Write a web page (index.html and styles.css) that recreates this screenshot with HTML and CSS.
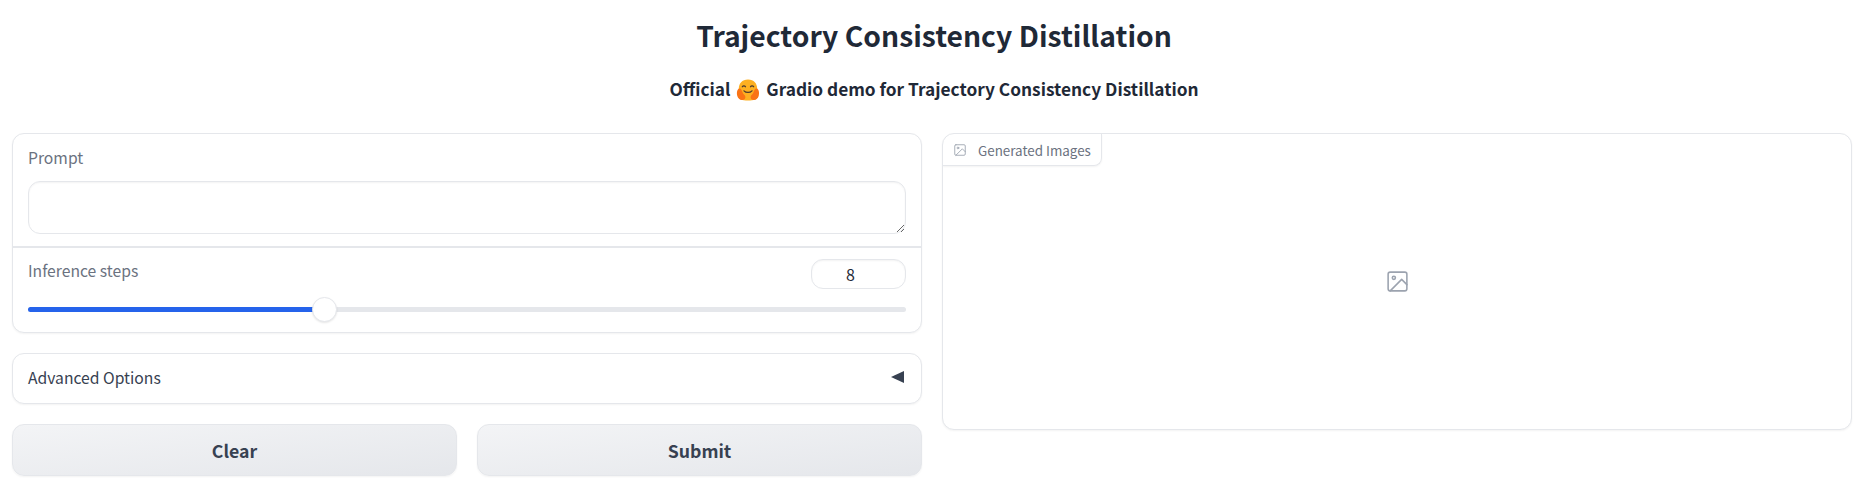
FILE: index.html
```html
<!DOCTYPE html>
<html lang="en">
<head>
<meta charset="utf-8">
<title>Trajectory Consistency Distillation</title>
<link rel="stylesheet" href="styles.css">
</head>
<body>
<header class="intro">
  <h1 class="title">Trajectory Consistency Distillation</h1>
  <p class="subtitle">Official
    <svg class="hug" viewBox="0 0 24 24" aria-hidden="true">
      <path d="M12 1.500C6 1.500 2.800 5.500 2.800 11c0 2.800-.6 5-.6 7.200C2.200 21 6 22.500 12 22.500s9.800-1.500 9.800-4.300c0-2.200-.6-4.400-.6-7.200C21.200 5.500 18 1.500 12 1.500z" fill="#fdb022"/>
      <path d="M3 10.500C1 11.500 .5 15 1.300 18c.6 2.300 2.400 4 4.700 4 2.600 0 3.800-1.700 3.300-3.500-.5-1.700-2.200-2.300-2.800-4.200C5.800 12.300 4.800 9.800 3 10.500zM21 10.500c2 1 2.500 4.500 1.700 7.500-.6 2.300-2.400 4-4.700 4-2.600 0-3.800-1.700-3.300-3.500.5-1.700 2.200-2.300 2.800-4.200.7-2 1.700-4.500 3.500-3.800z" fill="#f97316"/>
      <path d="M6.300 8.800c.7-1.300 2.500-1.300 3.200 0M14.500 8.800c.7-1.300 2.500-1.300 3.200 0" fill="none" stroke="#4b3a2f" stroke-width="1.200" stroke-linecap="round"/>
      <path d="M8 12.800c2 2.200 6 2.200 8 0" fill="none" stroke="#4b3a2f" stroke-width="1.200" stroke-linecap="round"/>
    </svg>
    Gradio demo for Trajectory Consistency Distillation</p>
</header>
<main class="columns">
  <section class="col-left">
    <div class="panel form">
      <div class="field field-prompt">
        <label class="label" for="prompt">Prompt</label>
        <textarea class="textbox" id="prompt"></textarea>
      </div>
      <div class="field field-slider">
        <div class="slider-head">
          <label class="label" for="steps">Inference steps</label>
          <input class="number" id="steps" type="text" value="8">
        </div>
        <div class="track">
          <div class="track-fill"></div>
          <div class="thumb"></div>
        </div>
      </div>
    </div>
    <div class="panel accordion">
      <span>Advanced Options</span>
      <span class="caret"></span>
    </div>
    <div class="actions">
      <button class="btn" type="button">Clear</button>
      <button class="btn" type="button">Submit</button>
    </div>
  </section>
  <section class="col-right">
    <div class="panel gallery">
      <div class="tab">
        <svg class="tab-icon" viewBox="0 0 24 24" aria-hidden="true">
          <rect x="3" y="3" width="18" height="18" rx="2"/>
          <circle cx="8.500" cy="8.500" r="1.500"/>
          <path d="M21 15l-5-5L5 21"/>
        </svg>
        <span>Generated Images</span>
      </div>
      <div class="empty">
        <svg class="empty-icon" viewBox="0 0 24 24" aria-hidden="true">
          <rect x="3" y="3" width="18" height="18" rx="2"/>
          <circle cx="8.500" cy="8.500" r="1.500"/>
          <path d="M21 15l-5-5L5 21"/>
        </svg>
      </div>
    </div>
  </section>
</main>
</body>
</html>
```
FILE: styles.css
```css
* { box-sizing: border-box; }
html, body { margin: 0; background: #fff; }
body {
  font-family: "Noto Sans CJK SC", "Noto Sans", sans-serif;
  color: #1f2937;
  padding: 0 16px 0 12px;
  height: 493px;
  overflow: hidden;
}
.intro { text-align: center; padding-left: 4px; }
.title {
  margin: 0;
  padding-top: 15px;
  font-size: 28.300px;
  line-height: 40px;
  font-weight: 600;
}
.subtitle {
  margin: 0;
  padding-top: 19px;
  font-size: 17.300px;
  line-height: 30px;
  font-weight: 600;
  height: 78px;
}
.hug { width: 24px; height: 24px; vertical-align: -6px; margin: 0 2px; }
.columns {
  display: grid;
  grid-template-columns: 1fr 1fr;
  gap: 20px;
  align-items: start;
}
.col-left { display: flex; flex-direction: column; gap: 20px; }
.panel {
  background: #fff;
  border: 1px solid #e5e7eb;
  border-radius: 12px;
  box-shadow: 0 1px 2px rgba(0, 0, 0, 0.05);
}
.form { overflow: hidden; height: 200px; }
.field { padding: 0 15px; }
.field-prompt {
  height: 114px;
  padding-top: 12px;
  border-bottom: 2px solid #e5e7eb;
}
.field-slider { padding-top: 11px; }
.label {
  display: block;
  font-size: 15.700px;
  line-height: 24px;
  color: #6b7280;
}
.textbox {
  display: block;
  width: 100%;
  height: 53px;
  margin-top: 11px;
  padding: 8px 12px;
  border: 1px solid #e5e7eb;
  border-radius: 12px;
  background: #fff;
  box-shadow: inset 0 1px 2px rgba(0, 0, 0, 0.05);
  font: inherit;
  outline: none;
}
.slider-head { display: flex; justify-content: space-between; align-items: flex-start; }
.number {
  width: 95px;
  height: 30px;
  border: 1px solid #e5e7eb;
  border-radius: 12px;
  box-shadow: inset 0 1px 2px rgba(0, 0, 0, 0.05);
  text-align: center;
  font: inherit;
  font-size: 16px;
  color: #1f2937;
  outline: none;
  padding: 0 16px 0 0;
}
.track {
  position: relative;
  height: 5px;
  margin-top: 18px;
  border-radius: 3px;
  background: #e5e7eb;
}
.track-fill {
  height: 100%;
  width: 33%;
  border-radius: 3px 0 0 3px;
  background: #2563eb;
}
.thumb {
  position: absolute;
  left: 32.400%;
  top: -10px;
  width: 25px;
  height: 25px;
  border: 1px solid #e5e7eb;
  border-radius: 50%;
  background: #fff;
  box-shadow: 0 1px 2px rgba(0, 0, 0, 0.1);
}
.accordion {
  display: flex;
  justify-content: space-between;
  align-items: center;
  height: 51px;
  padding: 0 17px 3px 15px;
  font-size: 15.700px;
  color: #374151;
}
.caret {
  width: 0;
  height: 0;
  border-style: solid;
  border-width: 6.500px 13px 6.500px 0;
  border-color: transparent #374151 transparent transparent;
}
.actions { display: grid; grid-template-columns: 1fr 1fr; gap: 20px; }
.btn {
  height: 52px;
  border: 1px solid #e5e7eb;
  border-radius: 12px;
  background: linear-gradient(to bottom right, #f3f4f6, #e5e7eb);
  box-shadow: 0 1px 2px rgba(0, 0, 0, 0.05);
  font: inherit;
  font-size: 17.700px;
  font-weight: 600;
  color: #374151;
}
.gallery {
  position: relative;
  height: 297px;
  display: flex;
  overflow: hidden;
}
.tab {
  position: absolute;
  top: 0;
  left: 0;
  display: flex;
  align-items: center;
  gap: 11px;
  height: 32px;
  padding: 0 10px;
  border-right: 1px solid #e5e7eb;
  border-bottom: 1px solid #e5e7eb;
  border-bottom-right-radius: 8px;
  box-shadow: 0 1px 2px rgba(0, 0, 0, 0.05);
  font-size: 13.400px;
  color: #6b7280;
}
.tab-icon, .empty-icon {
  fill: none;
  stroke: #9ca3af;
  stroke-width: 1.500;
  stroke-linecap: round;
  stroke-linejoin: round;
}
.tab-icon { width: 14px; height: 14px; }
.empty { flex: 1; display: flex; align-items: center; justify-content: center; }
.empty-icon { width: 25px; height: 25px; }
```
